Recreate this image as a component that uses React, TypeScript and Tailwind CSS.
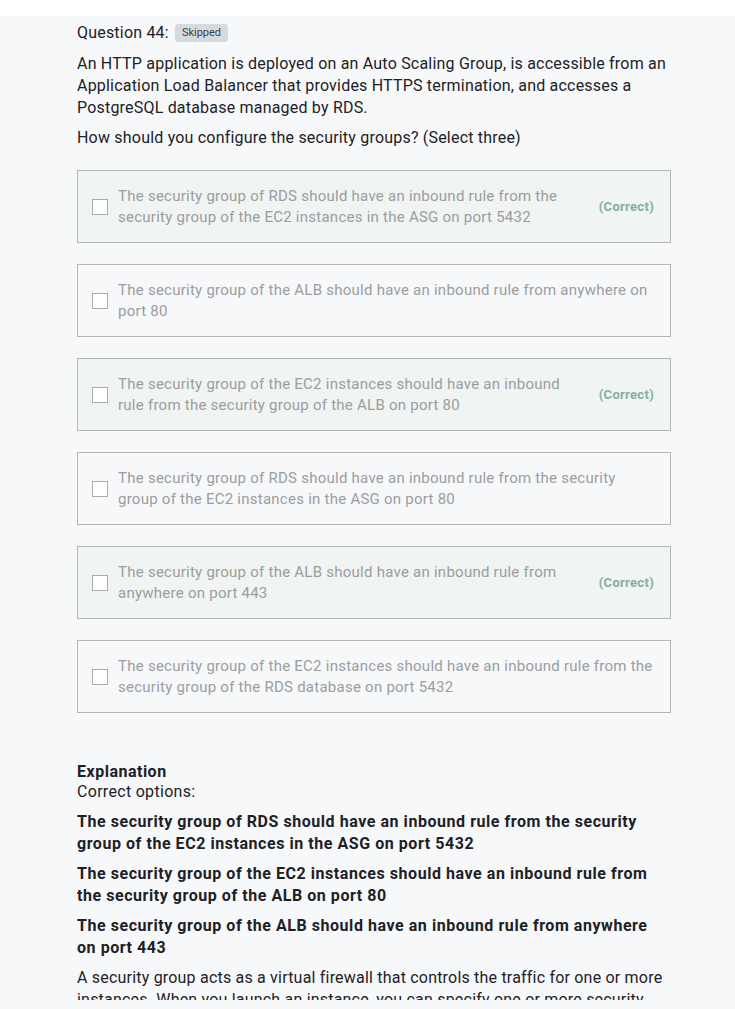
const options = [
  {
    text: 'The security group of RDS should have an inbound rule from the security group of the EC2 instances in the ASG on port 5432',
    correct: true,
  },
  {
    text: 'The security group of the ALB should have an inbound rule from anywhere on port 80',
    correct: false,
  },
  {
    text: 'The security group of the EC2 instances should have an inbound rule from the security group of the ALB on port 80',
    correct: true,
  },
  {
    text: 'The security group of RDS should have an inbound rule from the security group of the EC2 instances in the ASG on port 80',
    correct: false,
  },
  {
    text: 'The security group of the ALB should have an inbound rule from anywhere on port 443',
    correct: true,
  },
  {
    text: 'The security group of the EC2 instances should have an inbound rule from the security group of the RDS database on port 5432',
    correct: false,
  },
]

const correctText = options.filter(o => o.correct).map(o => o.text)

export default function App() {
  return (
    <div className="min-h-screen bg-white pt-4 font-['Roboto',sans-serif] text-[#1d2125]">
      <div className="h-[993px] overflow-hidden bg-[#f7f8fa]">
        <div className="ml-[77px] h-[984px] w-[594px] overflow-hidden pt-[6px]">
          <div className="flex items-center gap-[6px] text-base leading-[22px] tracking-[0.2px]">
            <span>Question 44:</span>
            <span className="rounded-[3px] bg-[#d6dade] px-[7px] text-[11px] leading-[18px] tracking-normal text-[#3c4248]">
              Skipped
            </span>
          </div>
          <p className="mt-[9px] text-base leading-[22px] tracking-[0.2px]">
            An HTTP application is deployed on an Auto Scaling Group, is accessible from an Application Load
            Balancer that provides HTTPS termination, and accesses a PostgreSQL database managed by RDS.
          </p>
          <p className="mt-2 text-base leading-[22px] tracking-[0.2px]">
            How should you configure the security groups? (Select three)
          </p>

          <div className="mt-[21px] flex flex-col gap-[21px]">
            {options.map((o, i) => (
              <div
                key={i}
                className={`flex items-center border border-[#b3b5b7] pt-[15px] pb-[14px] pl-[14px] pr-4 ${
                  o.correct ? 'bg-[#f0f4f2]' : 'bg-[#f7f8fa]'
                }`}
              >
                <span className="h-4 w-4 shrink-0 border border-[#a9abad] bg-white" />
                <span className="ml-[10px] flex-1 text-[15px] leading-[21px] tracking-[0.25px] text-[#9b9da0]">
                  {o.text}
                </span>
                {o.correct && (
                  <span className="ml-6 shrink-0 text-[13px] font-bold tracking-[0.3px] text-[#86ada1]">
                    (Correct)
                  </span>
                )}
              </div>
            ))}
          </div>

          <div className="mt-[49px] text-base leading-5">
            <div className="font-bold tracking-[0.5px]">Explanation</div>
            <div className="tracking-[0.3px]">Correct options:</div>
          </div>
          {correctText.map((t, i) => (
            <p
              key={i}
              className={`${i === 0 ? 'mt-[9px]' : 'mt-2'} text-base font-bold leading-[22px] tracking-[0.55px]`}
            >
              {t}
            </p>
          ))}
          <p className="mt-2 text-base leading-[22px] tracking-[0.2px]">
            A security group acts as a virtual firewall that controls the traffic for one or more instances. When
            you launch an instance, you can specify one or more security groups; otherwise, we use the default
            security group.
          </p>
        </div>
      </div>
    </div>
  )
}
